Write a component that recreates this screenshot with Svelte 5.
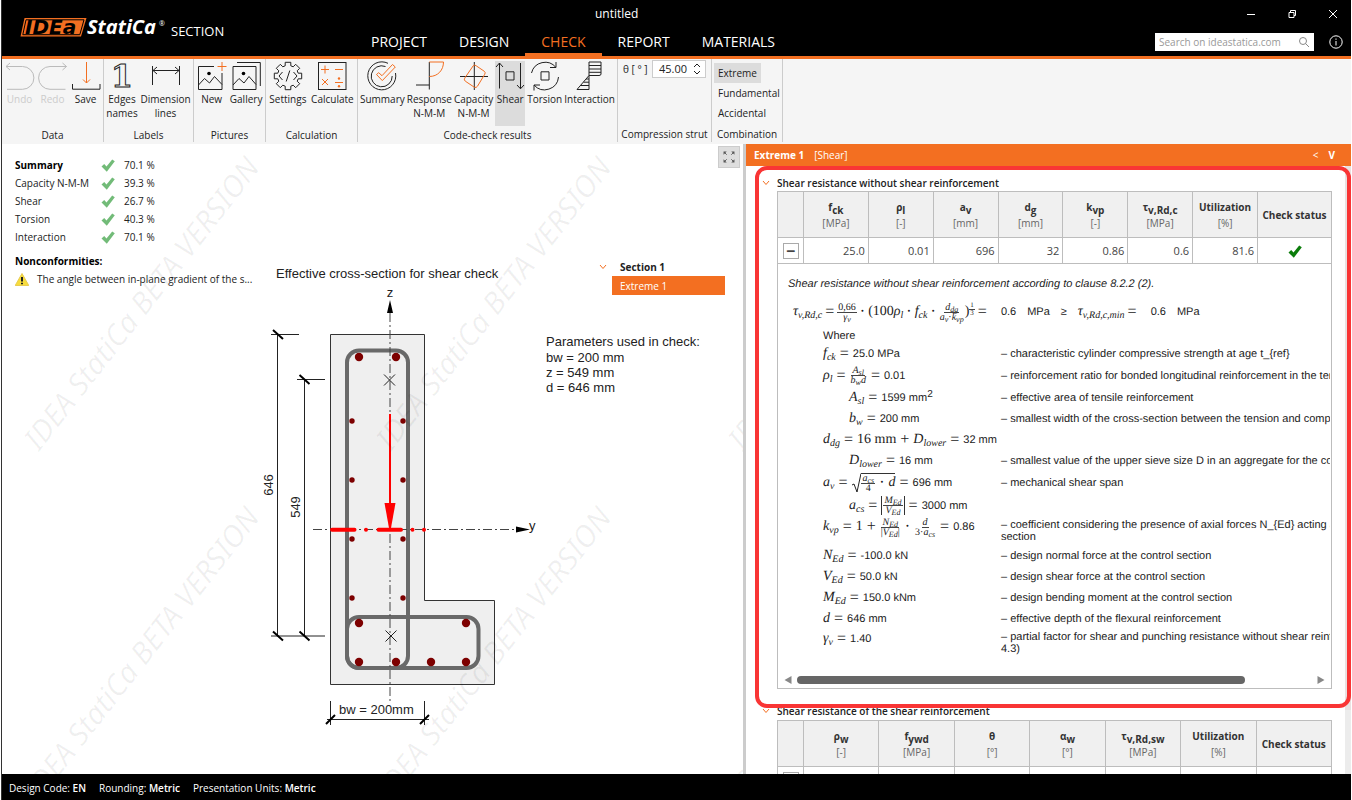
<script lang="ts">
	const tabs = ['PROJECT', 'DESIGN', 'CHECK', 'REPORT', 'MATERIALS']
	let activeTab = $state('CHECK')

	const groups = [
		{ label: 'Data', cls: 'data', items: [['undo', 'Undo'], ['redo', 'Redo'], ['save', 'Save']] },
		{ label: 'Labels', cls: 'labels', items: [['edges', 'Edges names'], ['dimension', 'Dimension lines']] },
		{ label: 'Pictures', cls: 'pictures', items: [['new', 'New'], ['gallery', 'Gallery']] },
		{ label: 'Calculation', cls: 'calc', items: [['settings', 'Settings'], ['calculate', 'Calculate']] },
		{
			label: 'Code-check results',
			cls: 'results',
			items: [
				['summary', 'Summary'],
				['response', 'Response N-M-M'],
				['capacity', 'Capacity N-M-M'],
				['shear', 'Shear'],
				['torsion', 'Torsion'],
				['interaction', 'Interaction']
			]
		}
	]

	let activeTool = $state('shear')
	let combination = $state('Extreme')
	let theta = $state('45.00')

	const summary = [
		['Summary', '70.1 %'],
		['Capacity N-M-M', '39.3 %'],
		['Shear', '26.7 %'],
		['Torsion', '40.3 %'],
		['Interaction', '70.1 %']
	]

	const marks = [
		[39, 452],
		[391, 452],
		[743, 452],
		[39, 802],
		[391, 802],
		[743, 802]
	]
	const bars = [[359, 357], [396, 357], [359, 623], [466, 623], [359, 662], [396, 662], [431, 662], [466, 662]]
	const sideBars = [421, 480, 539, 598]

	// header cells: symbol, subscript, unit
	const resistance = [
		['f', 'ck', '[MPa]', '25.0'],
		['ρ', 'l', '[-]', '0.01'],
		['a', 'v', '[mm]', '696'],
		['d', 'g', '[mm]', '32'],
		['k', 'vp', '[-]', '0.86'],
		['τ', 'v,Rd,c', '[MPa]', '0.6'],
		['Utilization', '', '[%]', '81.6']
	]
	const reinforcement = [
		['ρ', 'w', '[-]'],
		['f', 'ywd', '[MPa]'],
		['θ', '', '[°]'],
		['α', 'w', '[°]'],
		['τ', 'v,Rd,sw', '[MPa]'],
		['Utilization', '', '[%]']
	]

	// maths tokens: plain string, [variable, subscript], or { n, d } for a fraction
	const rows: any[] = [
		{ m: [['f', 'ck'], '='], v: '25.0 MPa', t: ['– characteristic cylinder compressive strength at age t_{ref}'] },
		{ m: [['ρ', 'l'], '=', { n: [['A', 'sl']], d: [['b', 'w'], ['d', '']] }, '='], v: '0.01', t: ['– reinforcement ratio for bonded longitudinal reinforcement in the tensi'], fraction: true },
		{ m: [['A', 'sl'], '='], v: '1599 mm', sup: '2', t: ['– effective area of tensile reinforcement'], sub: true },
		{ m: [['b', 'w'], '='], v: '200 mm', t: ['– smallest width of the cross-section between the tension and compres'], sub: true },
		{ m: [['d', 'dg'], '=', '16 mm', '+', ['D', 'lower'], '='], v: '32 mm', t: [] },
		{ m: [['D', 'lower'], '='], v: '16 mm', t: ['– smallest value of the upper sieve size D in an aggregate for the coar'], sub: true },
		{ m: [['a', 'v'], '=', { root: [{ n: [['a', 'cs']], d: ['4'] }, '·', ['d', '']] }, '='], v: '696 mm', t: ['– mechanical shear span'], fraction: true },
		{ m: [['a', 'cs'], '=', { abs: [{ n: [['M', 'Ed']], d: [['V', 'Ed']] }] }, '='], v: '3000 mm', t: [], sub: true, fraction: true },
		{ m: [['k', 'vp'], '=', '1', '+', { n: [['N', 'Ed']], d: ['|', ['V', 'Ed'], '|'] }, '·', { n: [['d', '']], d: ['3·', ['a', 'cs']] }, '='], v: '0.86', t: ['– coefficient considering the presence of axial forces N_{Ed} acting at', 'section'], tall: true },
		{ m: [['N', 'Ed'], '='], v: '-100.0 kN', t: ['– design normal force at the control section'] },
		{ m: [['V', 'Ed'], '='], v: '50.0 kN', t: ['– design shear force at the control section'] },
		{ m: [['M', 'Ed'], '='], v: '150.0 kNm', t: ['– design bending moment at the control section'] },
		{ m: [['d', ''], '='], v: '646 mm', t: ['– effective depth of the flexural reinforcement'] },
		{ m: [['γ', 'v'], '='], v: '1.40', t: ['– partial factor for shear and punching resistance without shear reinfor', '4.3)'], tall: true }
	]

	function gear() {
		const pts: string[] = []
		const teeth = 8
		for (let i = 0; i < teeth; i++) {
			const a = (i * 2 * Math.PI) / teeth
			const steps = [[-0.27, 10.6], [-0.2, 14], [0.2, 14], [0.27, 10.6]]
			for (const [da, r] of steps) {
				pts.push(`${(15 + r * Math.cos(a + da)).toFixed(1)},${(15 + r * Math.sin(a + da)).toFixed(1)}`)
			}
		}
		return pts.join(' ')
	}

	function spin(step: number) {
		theta = (parseFloat(theta) + step).toFixed(2)
	}
</script>

{#snippet icon(name: string)}
	<svg class="icon" viewBox="0 0 30 30" aria-hidden="true">
		{#if name === 'undo'}
			<path class="off" d="M1 5.5H17.5a11.3 11.3 0 0 1 0 22.8H2M5 2 1 5.5 5 9" />
		{:else if name === 'redo'}
			<path class="off" d="M28.5 5.5H12a11.3 11.3 0 0 0 0 22.8H27.5M24.5 2l4 3.5-4 3.5" />
		{:else if name === 'save'}
			<path class="or" d="M15.5 1V22M12 18.5l3.5 3.5 3.5-3.5" />
			<path d="M1.500 23v5.200H29V23" />
		{:else if name === 'edges'}
			<text x="15" y="26" text-anchor="middle">1</text>
		{:else if name === 'dimension'}
			<path d="M1.5 5v19M28.5 5v19M2 9.5H28M6 6 2 9.5 6 13M24 6l4 3.5L24 13" />
		{:else if name === 'new'}
			<path d="M17 5.5H1.5V28.5H25V12M1.5 24l6-6.5 5 4.5 5-6.5 7.5 8" />
			<circle class="dot" cx="12" cy="12.5" r="1.8" />
			<path class="or" d="M20.5 5.5h9M25 1v9" />
		{:else if name === 'gallery'}
			<path d="M2 5.5H25V28.5H2zM2 24l6-6.5 5 4.5 5-6.5 7 8M6 1.5H29.3V25" />
			<circle class="dot" cx="12.5" cy="12.5" r="1.8" />
		{:else if name === 'settings'}
			<polygon points={gear()} />
			<path d="M9.5 11 6 15l3.5 4M20.5 11l3.5 4-3.5 4M16.8 9.5l-3.6 11" />
		{:else if name === 'calculate'}
			<rect x="1.5" y="1.5" width="27.5" height="27" />
			<path class="or" d="M4 8.500h8M8 4.500v8M18 8.500h8M5 18l6 6M11 18l-6 6M18 21.500h8" />
			<circle class="ordot" cx="22" cy="17.500" r="1.200" />
			<circle class="ordot" cx="22" cy="25.200" r="1.200" />
		{:else if name === 'summary'}
			<path d="M21 2.3A14 14 0 1 0 28.5 12M18.5 5.5A10.5 10.5 0 1 0 25.2 15" />
			<path class="or" d="M9.5 13.5l2.2-1.8 3.3 3L25.500 3.500 28.300 6 15.300 19.600z" />
		{:else if name === 'response'}
			<path d="M15.3 1V28.5M2 24H15.3" />
			<path class="or" d="M15.3 1H29.5c0 8-5.5 14.5-14.2 14.5" />
		{:else if name === 'capacity'}
			<path d="M15.3 1V29M1 15.5H29" />
			<path class="or" d="M14.2 4.8q1.5-1.5 3 0l8 5.4q1.6 1.2.6 3l-7.3 12q-1.2 2-3.2 1l-9-6q-1.6-1.2-.6-3z" />
		{:else if name === 'shear'}
			<path d="M4.500 27.500V2M1 6l3.500-4L8 6M25.500 2V27.500M22 24l3.500 3.800 3.500-3.800M11 10.800h8V19h-8z" />
		{:else if name === 'torsion'}
			<path d="M1.5 12A14 14 0 0 1 26 6.5V1M26 6.5h-6M28.5 16A14 14 0 0 1 4 24v5.5M4 24h6M11 10.8h8V19h-8z" />
		{:else}
			<path d="M14 1H26V13q0 1.5-2 1.5H14zM14 4.5H26M14 8H26M14 11.3H26M14 14.5V28.5H2zM11 18h3M8.5 21.2h5.5M5.5 24.5h8.5" />
		{/if}
	</svg>
{/snippet}

{#snippet tokens(list: any[])}
	{#each list as t}
		{#if typeof t === 'string'}
			<span class={t === '=' || t === '+' || t === '·' ? 'op' : 'num'}>{t}</span>
		{:else if Array.isArray(t)}
			<span class="var">{t[0]}{#if t[1]}<sub>{t[1]}</sub>{/if}</span>
		{:else if t.n}
			<span class="frac"><span class="top">{@render tokens(t.n)}</span><span>{@render tokens(t.d)}</span></span>
		{:else if t.root}
			<svg class="radical" viewBox="0 0 10 20" aria-hidden="true"><path d="M1 12l2-1 3 8L10 .5" /></svg><span class="root">{@render tokens(t.root)}</span>
		{:else if t.abs}
			<span class="abs">{@render tokens(t.abs)}</span>
		{/if}
	{/each}
{/snippet}

{#snippet tick()}
	<svg class="tick" viewBox="0 0 14 13" aria-hidden="true"><path d="M.5 7.500 3.200 5l2.300 2.500L11.200.5l2.600 1.700L5.800 12.800z" /></svg>
{/snippet}

{#snippet caret()}
	<svg class="caret" viewBox="0 0 8 6" aria-hidden="true"><path d="M1 1l3 3.5L7 1" /></svg>
{/snippet}

<div class="app">
	<header>
		<div class="brand">
			<svg class="logo" viewBox="0 0 148 24" aria-label="IDEA StatiCa">
				<path class="plate" d="M4.500 2H66.500L61 20.500H.5z" />
				<path class="inset" d="M6 3.800H64L59.800 18.700H2.800z" />
				<text class="idea" x="5" y="18">IDEa</text>
				<text class="statica" x="67" y="18">StatiCa</text>
				<text class="reg" x="139" y="10">®</text>
			</svg>
			<span>SECTION</span>
		</div>
		<div class="middle">
			<div class="doc">untitled</div>
			<nav>
				{#each tabs as tab}
					<button class="tab" class:active={activeTab === tab} onclick={() => (activeTab = tab)}>{tab}</button>
				{/each}
			</nav>
		</div>
		<div class="right">
			<div class="window">
				<button aria-label="Minimize"><svg viewBox="0 0 10 10"><path d="M1 5.500h8" /></svg></button>
				<button aria-label="Restore"><svg viewBox="0 0 10 10"><path d="M2 3.500h5v5H2zM3.500 3.500v-2h5v5H7" /></svg></button>
				<button aria-label="Close"><svg viewBox="0 0 10 10"><path d="M1 1l8 8M9 1L1 9" /></svg></button>
			</div>
			<div class="find">
				<label class="search">
					<input type="text" placeholder="Search on ideastatica.com" aria-label="Search on ideastatica.com" />
					<svg viewBox="0 0 12 12" aria-hidden="true"><circle cx="5" cy="5" r="3.500" /><path d="M7.500 7.500 11 11" /></svg>
				</label>
				<button class="info" aria-label="Information">
					<svg viewBox="0 0 14 14"><circle cx="7" cy="7" r="6.200" /><path d="M7 6v4.500M7 3.500v1.300" /></svg>
				</button>
			</div>
		</div>
	</header>

	<div class="ribbon">
		{#each groups as group}
			<section class="group {group.cls}">
				<div class="tools">
					{#each group.items as [id, label]}
						<button class="tool" class:active={activeTool === id} disabled={id === 'undo' || id === 'redo'} onclick={() => (activeTool = id)}>
							{@render icon(id)}
							<span>{#each label.split(' ') as word}<span class="word">{word}</span>{/each}</span>
						</button>
					{/each}
				</div>
				<div class="caption">{group.label}</div>
			</section>
		{/each}
		<section class="group strut">
			<div class="angle">
				<label for="theta">θ [ ° ]</label>
				<div class="spinner">
					<input id="theta" type="text" bind:value={theta} />
					<div class="arrows">
						<button aria-label="Increase" onclick={() => spin(1)}><svg viewBox="0 0 8 5"><path d="M1 4l3-3 3 3" /></svg></button>
						<button aria-label="Decrease" onclick={() => spin(-1)}><svg viewBox="0 0 8 5"><path d="M1 1l3 3 3-3" /></svg></button>
					</div>
				</div>
			</div>
			<div class="caption">Compression strut</div>
		</section>
		<section class="group combi">
			<div class="choices">
				{#each ['Extreme', 'Fundamental', 'Accidental'] as c}
					<button class:active={combination === c} onclick={() => (combination = c)}>{c}</button>
				{/each}
			</div>
			<div class="caption">Combination</div>
		</section>
	</div>

	<main>
		<section class="canvas">
			<svg class="drawing" viewBox="2 144 741 630" preserveAspectRatio="xMinYMin meet">
				<path class="concrete" d="M330.500 334.500H424.500V600.500H494.500V684.500H330.500z" />
				<rect class="stirrup" x="347" y="350.500" width="61" height="317.500" rx="12" />
				<rect class="stirrup" x="347" y="617" width="131.500" height="51" rx="12" />
				<path class="axis" d="M390 313V702M313 529.500H517" />
				<path class="black" d="M390 300l3 13h-6zM530 529.500l-14-3v6z" />
				{#each bars as [x, y]}
					<circle class="bar" cx={x} cy={y} r="4.200" />
				{/each}
				{#each sideBars as y}
					<circle class="bar" cx="352" cy={y} r="2.700" />
					<circle class="bar" cx="403" cy={y} r="2.700" />
				{/each}
				<path class="cross" d="M384 374.500l11 11M395 374.500l-11 11M385.500 630.500l11 11M396.500 630.500l-11 11" />
				<path class="force" d="M390 414V506" />
				<path class="red" d="M384.500 503h11L391 528h-2z" />
				<path class="neutral" d="M332 529.800h22.500M366 529.800h.01M378.500 529.800h22.500M412.500 529.800h.01M424 529.800h.01" />
				<path class="dim" d="M277.500 334.500V636M271 334.500h28M271 636h54M304.500 379.500V636M297 379.500h28M330.500 701v24M424.500 701v24M327 719.500h102" />
				<path class="slash" d="M273 330l10 9M299.500 375l10 9M273 631.500l10 9M299.500 631.500l10 9M326 724l9-9M420 724l9-9" />
				<text x="276" y="278">Effective cross-section for shear check</text>
				<text x="390" y="297" text-anchor="middle">z</text>
				<text x="529" y="530">y</text>
				<text x="339" y="714">bw = 200mm</text>
				<text text-anchor="middle" transform="translate(273 485) rotate(-90)">646</text>
				<text text-anchor="middle" transform="translate(300 507) rotate(-90)">549</text>
				<text x="546" y="346">Parameters used in check:</text>
				<text x="546" y="362">bw = 200 mm</text>
				<text x="546" y="377">z = 549 mm</text>
				<text x="546" y="392">d = 646 mm</text>
				{#each marks as [x, y]}
					<text class="watermark" transform="translate({x} {y}) rotate(-52)">IDEA StatiCa BETA VERSION</text>
				{/each}
			</svg>

			<div class="overview">
				<ul>
					{#each summary as [name, value], i}
						<li class:strong={i === 0}><span>{name}</span>{@render tick()}<span class="pct">{value}</span></li>
					{/each}
				</ul>
				<h2>Nonconformities:</h2>
				<div class="warning">
					<svg viewBox="0 0 14 13" aria-hidden="true"><path d="M7 .5 13.800 12.500H.2z" /><path class="bang" d="M7 4v4.500M7 9.700v1.500" /></svg>
					<span>The angle between in-plane gradient of the s...</span>
				</div>
			</div>

			<div class="tree">
				<div class="node">{@render caret()}<b>Section 1</b></div>
				<button>Extreme 1</button>
			</div>

			<button class="expand" aria-label="Zoom to fit">
				<svg viewBox="0 0 22 22"><path d="M8.500 8.500 6 6M13.500 8.500 16 6M8.500 13.500 6 16M13.500 13.500 16 16" /><path class="tips" d="M5 5h3.500L5 8.500zM17 5v3.500L13.500 5zM5 17v-3.500L8.500 17zM17 17h-3.500l3.500-3.500z" /></svg>
			</button>
		</section>

		<section class="results-pane">
			<div class="pane-title"><b>Extreme 1</b><span>[Shear]</span><span class="less">&lt;</span><b>V</b></div>
			<div class="scroll">
				<div class="sheets">
					<article class="first-sheet">
						<h3>{@render caret()}Shear resistance without shear reinforcement</h3>
						<table>
							<thead>
								<tr>
									<th class="toggle"></th>
									{#each resistance as [s, sub, unit]}
										<th><span class="sym">{s}{#if sub}<sub>{sub}</sub>{/if}</span><span class="unit">{unit}</span></th>
									{/each}
									<th class="status">Check status</th>
								</tr>
							</thead>
							<tbody>
								<tr>
									<td class="toggle"><button aria-label="Collapse">−</button></td>
									{#each resistance as r}
										<td>{r[3]}</td>
									{/each}
									<td class="ok">{@render tick()}</td>
								</tr>
							</tbody>
						</table>
						<div class="detail">
							<p class="clause">Shear resistance without shear reinforcement according to clause 8.2.2 (2).</p>
							<div class="main-formula">
								<span class="math">{@render tokens([['τ', 'v,Rd,c'], '=', { n: ['0,66'], d: [['γ', 'v']] }, '·', '(100', ['ρ', 'l'], '·', ['f', 'ck'], '·', { n: [['d', 'dg']], d: [['a', 'v'], '·', ['k', 'vp']] }, ')'])}<span class="power">{@render tokens([{ n: ['1'], d: ['3'] }])}</span>{@render tokens(['='])}</span>
								<span>0.6</span><span>MPa</span><span>≥</span>
								<span class="math">{@render tokens([['τ', 'v,Rd,c,min'], '='])}</span>
								<span>0.6</span><span>MPa</span>
							</div>
							<p class="where">Where</p>
							<div class="legend">
								{#each rows as row}
									<div class="row" class:nested={row.sub} class:fraction={row.fraction} class:tall={row.tall}>
										<div class="math">{@render tokens(row.m)}<span class="value">{row.v}{#if row.sup}<sup>{row.sup}</sup>{/if}</span></div>
										<div class="desc">{#each row.t as line}<span>{line}</span>{/each}</div>
									</div>
								{/each}
							</div>
							<div class="hbar">
								<svg viewBox="0 0 8 8" aria-hidden="true"><path d="M7.500 0v8L.5 4z" /></svg>
								<div class="track"><div class="thumb"></div></div>
								<svg viewBox="0 0 8 8" aria-hidden="true"><path d="M.5 0v8L7.500 4z" /></svg>
							</div>
						</div>
					</article>

					<article class="next">
						<h3>{@render caret()}Shear resistance of the shear reinforcement</h3>
						<table>
							<thead>
								<tr>
									<th class="toggle"></th>
									{#each reinforcement as [s, sub, unit]}
										<th><span class="sym">{s}{#if sub}<sub>{sub}</sub>{/if}</span><span class="unit">{unit}</span></th>
									{/each}
									<th>Check status</th>
								</tr>
							</thead>
							<tbody>
								<tr>
									<td class="toggle"><button aria-label="Collapse">−</button></td>
									{#each reinforcement as _}
										<td></td>
									{/each}
									<td class="ok">{@render tick()}</td>
								</tr>
							</tbody>
						</table>
					</article>
				</div>
				<div class="vbar"><div></div></div>
			</div>
		</section>
	</main>

	<footer>
		<span>Design Code: <b>EN</b></span>
		<span>Rounding: <b>Metric</b></span>
		<span>Presentation Units: <b>Metric</b></span>
	</footer>
</div>

<style>
	:global(body) {
		background: #fff;
	}

	.app {
		--orange: #f36f21;
		--line: #bdbdbd;
		height: 100vh;
		margin: 0 1px;
		border-left: 1px solid #333;
		box-sizing: border-box;
		display: flex;
		flex-direction: column;
		overflow: hidden;
		font-family: 'Open Sans', 'Noto Sans', sans-serif;
		font-size: 10px;
		line-height: 14px;
		color: #222;
	}

	button {
		font: inherit;
		color: inherit;
		background: none;
		border: 0;
		padding: 0;
	}

	svg {
		fill: none;
		stroke: currentColor;
		flex: none;
	}

	h2,
	h3,
	p,
	ul {
		margin: 0;
		padding: 0;
		font-size: inherit;
		list-style: none;
	}

	header {
		flex: none;
		height: 56px;
		display: flex;
		background: #000;
		color: #fff;
		border-bottom: 3px solid var(--orange);
	}

	.brand {
		width: 351px;
		display: flex;
		align-items: center;
		gap: 3px;
		padding-left: 18px;
		box-sizing: border-box;
		font-size: 13px;
	}

	.brand > span {
		padding-top: 6px;
	}

	.logo {
		width: 148px;
		height: 24px;
		stroke: none;
		overflow: visible;
	}

	.plate {
		fill: var(--orange);
	}

	.logo .inset {
		stroke: #000;
	}

	.logo text {
		fill: #fff;
		font-weight: 700;
		font-style: italic;
	}

	.logo .idea {
		fill: #000;
		font-family: 'DejaVu Sans', sans-serif;
		font-size: 20px;
	}

	.logo .statica {
		font-size: 20px;
	}

	.logo .reg {
		font-size: 7px;
		font-weight: 400;
	}

	.middle {
		flex: 1;
		display: flex;
		flex-direction: column;
		justify-content: space-between;
	}

	.doc {
		padding: 6px 0 0 242px;
		font-size: 12px;
		line-height: 16px;
	}

	nav {
		display: flex;
		padding-left: 2px;
	}

	.tab {
		padding: 4px 16px 2px;
		font-size: 14px;
		line-height: 18px;
		border-bottom: 3px solid transparent;
	}

	.tab.active {
		color: var(--orange);
		border-color: var(--orange);
	}

	.right {
		padding-right: 8px;
		display: flex;
		flex-direction: column;
		justify-content: space-between;
	}

	.window {
		display: flex;
		justify-content: flex-end;
		gap: 31px;
		padding: 9px 5px 0 0;
	}

	.window button,
	.window svg {
		display: block;
		width: 10px;
		height: 10px;
	}

	.find {
		display: flex;
		align-items: center;
		gap: 15px;
		padding-bottom: 5px;
	}

	.search {
		width: 159px;
		height: 18px;
		display: flex;
		align-items: center;
		background: #fff;
		color: #888;
		padding: 0 4px;
		box-sizing: border-box;
	}

	.search input {
		flex: 1;
		min-width: 0;
		padding: 0;
		border: 0;
		outline: 0;
		font: inherit;
	}

	.search input::placeholder {
		color: #999;
	}

	.search svg {
		width: 12px;
		height: 12px;
	}

	.info,
	.info svg {
		display: block;
		width: 14px;
		height: 14px;
	}

	.ribbon {
		flex: none;
		height: 85px;
		display: flex;
		background: #f5f5f5;
	}

	.group {
		flex: none;
		display: flex;
		flex-direction: column;
		justify-content: space-between;
		box-sizing: border-box;
		border-right: 1px solid #ccc;
		margin-bottom: 2px;
	}

	.data {
		width: 102px;
	}

	.labels {
		width: 90px;
	}

	.pictures {
		width: 72px;
	}

	.calc {
		width: 92px;
	}

	.results {
		width: 260px;
	}

	.strut {
		width: 94px;
	}

	.combi {
		width: 71px;
	}

	.caption {
		text-align: center;
		white-space: nowrap;
	}

	.strut .caption,
	.combi .caption {
		padding-bottom: 1px;
	}

	.tools {
		display: flex;
		justify-content: space-around;
		padding: 2px 1px 0;
	}

	.tool {
		height: 65px;
		min-width: 29px;
		display: flex;
		flex-direction: column;
		align-items: center;
		gap: 1px;
	}

	.tool.active {
		background: #dcdcdc;
	}

	.tool:disabled {
		color: #ccc;
	}

	.word {
		display: block;
	}

	.icon {
		width: 30px;
		height: 30px;
		stroke: #222;
		overflow: visible;
	}

	.icon text {
		font: 32px 'DejaVu Serif', serif;
		font-weight: 700;
	}

	.icon .or {
		stroke: var(--orange);
	}

	.icon .off {
		stroke: #bbb;
	}

	.icon .dot {
		fill: #000;
		stroke: none;
	}

	.icon .ordot {
		fill: var(--orange);
		stroke: none;
	}

	.angle {
		display: flex;
		align-items: center;
		justify-content: space-between;
		padding: 1px 5px;
	}

	.spinner {
		width: 54px;
		height: 18px;
		display: flex;
		background: #fff;
		border: 1px solid #ccc;
		box-sizing: border-box;
	}

	.spinner input {
		width: 40px;
		padding: 0 0 0 6px;
		border: 0;
		box-sizing: border-box;
		font: inherit;
		font-size: 11px;
		color: inherit;
		background: none;
	}

	.arrows {
		display: flex;
		flex-direction: column;
		justify-content: space-evenly;
	}

	.arrows button,
	.arrows svg {
		display: block;
		width: 8px;
		height: 5px;
	}

	.choices {
		display: flex;
		flex-direction: column;
		align-items: flex-start;
		padding: 4px 0 0 2px;
	}

	.choices button {
		height: 20px;
		padding: 0 4px;
	}

	.choices .active {
		background: #dcdcdc;
	}

	main {
		flex: 1;
		min-height: 0;
		display: flex;
	}

	.canvas {
		flex: 741;
		position: relative;
		background: #fff;
		overflow: hidden;
	}

	.drawing {
		position: absolute;
		inset: 0;
		width: 100%;
		height: 100%;
		stroke: none;
	}

	.drawing text {
		font-family: 'Liberation Sans', Arial, sans-serif;
		font-size: 13px;
		fill: #222;
	}

	.drawing .watermark {
		font-family: 'Noto Sans', sans-serif;
		font-style: italic;
		font-size: 30px;
		fill: #000;
		fill-opacity: 0.06;
	}

	.concrete {
		fill: #efefef;
		stroke: #333;
	}

	.stirrup {
		stroke: #696969;
		stroke-width: 4;
	}

	.axis {
		stroke: #444;
		stroke-dasharray: 9 3 2 3;
	}

	.black {
		fill: #000;
	}

	.bar {
		fill: #7d0000;
	}

	.cross,
	.dim {
		stroke: #222;
	}

	.slash {
		stroke: #000;
		stroke-width: 2;
	}

	.force {
		stroke: #f00;
		stroke-width: 2;
	}

	.red {
		fill: #f00;
	}

	.neutral {
		stroke: #f00;
		stroke-width: 4;
		stroke-linecap: round;
	}

	.overview {
		position: relative;
		width: 260px;
		padding: 12px 0 0 13px;
	}

	.overview li {
		height: 18px;
		line-height: 18px;
		display: grid;
		grid-template-columns: 86px 23px 1fr;
		align-items: center;
	}

	.overview .strong span:first-child {
		font-weight: 700;
		color: #000;
	}

	.overview h2 {
		margin-top: 6px;
		line-height: 18px;
		color: #000;
	}

	.warning {
		display: flex;
		align-items: center;
		gap: 8px;
		line-height: 18px;
		white-space: nowrap;
	}

	.warning svg {
		width: 14px;
		height: 13px;
		fill: #f7dc3c;
		stroke: #e8cc50;
	}

	.warning .bang {
		stroke: #222;
		stroke-width: 2;
	}

	.tick {
		width: 14px;
		height: 13px;
		fill: #72bb78;
		stroke: none;
	}

	.ok .tick {
		fill: #0b7d0b;
		vertical-align: middle;
	}

	.caret {
		width: 8px;
		height: 6px;
		stroke: var(--orange);
	}

	.tree {
		position: absolute;
		top: 114px;
		right: 18px;
		width: 126px;
	}

	.node {
		display: flex;
		align-items: center;
		gap: 13px;
		height: 18px;
	}

	.tree button {
		display: block;
		width: 113px;
		height: 19px;
		margin-left: auto;
		padding-left: 8px;
		text-align: left;
		background: var(--orange);
		color: #fff;
	}

	.expand {
		position: absolute;
		top: 2px;
		right: 3px;
		width: 22px;
		height: 22px;
		background: #dedede;
		border: 1px solid #ccc;
		color: #555;
	}

	.expand svg {
		display: block;
		width: 20px;
		height: 20px;
	}

	.expand .tips {
		fill: #555;
		stroke: none;
	}

	.results-pane {
		flex: 605;
		min-width: 0;
		display: flex;
		flex-direction: column;
		border-left: 3px solid #ccc;
		background: #fff;
	}

	.pane-title {
		flex: none;
		height: 22px;
		display: flex;
		align-items: center;
		gap: 10px;
		padding: 0 16px 0 8px;
		background: var(--orange);
		color: #fff;
	}

	.less {
		margin-left: auto;
	}

	.scroll {
		position: relative;
		flex: 1;
		min-height: 0;
		display: flex;
	}

	/* highlight drawn over the first sheet */
	.scroll::after {
		content: '';
		position: absolute;
		top: 0;
		left: 9px;
		right: 0;
		height: 534px;
		border: 4px solid #f93535;
		border-radius: 12px;
		pointer-events: none;
	}

	.sheets {
		flex: 1;
		min-width: 0;
		overflow: hidden;
		padding: 8px 13px 0 15px;
	}

	.vbar {
		width: 6px;
		background: #ececec;
	}

	.vbar div {
		height: 544px;
		background: #e9e1e1;
	}

	h3 {
		display: flex;
		align-items: center;
		gap: 7px;
		height: 17px;
		padding-left: 1px;
		color: #222;
		font-weight: 600;
	}

	.next h3 {
		margin-top: 13px;
		padding-bottom: 1px;
	}

	table {
		width: calc(100% - 16px);
		margin-left: 16px;
		table-layout: fixed;
		border-collapse: collapse;
		box-sizing: border-box;
	}

	th,
	td {
		border: 1px solid var(--line);
		padding: 0;
	}

	th {
		height: 45px;
		background: #f0f0f0;
		color: #333;
	}

	.toggle {
		width: 25px;
	}

	.status {
		width: 73px;
	}

	.sym,
	.unit {
		display: block;
		line-height: 16px;
	}

	.sym sub {
		font-size: 10px;
		line-height: 0;
		vertical-align: -3px;
	}

	.unit {
		font-weight: 400;
		color: #666;
	}

	td {
		height: 25px;
		padding-right: 3px;
		text-align: right;
		font-size: 11px;
		color: #444;
	}

	td.toggle,
	td.ok {
		padding: 0;
		text-align: center;
	}

	td button {
		width: 16px;
		height: 16px;
		border: 1px solid #aaa;
		font-size: 16px;
		font-weight: 700;
		line-height: 12px;
		vertical-align: middle;
	}

	.detail {
		height: 425px;
		margin-left: 16px;
		box-sizing: border-box;
		border: 1px solid var(--line);
		border-top: 0;
		padding: 13px 1px 3px;
		overflow: hidden;
		display: flex;
		flex-direction: column;
		font-family: 'Liberation Sans', Arial, sans-serif;
		font-size: 11px;
		text-rendering: geometricPrecision;
		white-space: nowrap;
	}

	.clause {
		padding-left: 9px;
		font-style: italic;
	}

	.main-formula {
		display: flex;
		align-items: center;
		gap: 11px;
		height: 34px;
		padding: 4px 0 0 14px;
	}

	.where {
		padding-left: 44px;
	}

	.legend {
		flex: 1;
		padding-left: 44px;
		overflow: hidden;
	}

	.row {
		display: grid;
		grid-template-columns: 178px 1fr;
		align-items: center;
		height: 21px;
	}

	.nested {
		grid-template-columns: 152px 1fr;
		padding-left: 26px;
	}

	.fraction {
		height: 23px;
	}

	.tall {
		height: 28px;
		align-items: start;
	}

	.tall .desc {
		padding-top: 2px;
	}

	.desc span {
		display: block;
		line-height: 12px;
	}

	.math {
		display: flex;
		align-items: center;
		font-family: 'Liberation Serif', 'Times New Roman', serif;
		font-size: 14px;
		line-height: 20px;
	}

	.math .var {
		font-style: italic;
	}

	.math sub {
		font-size: 10px;
		line-height: 0;
		vertical-align: -3px;
	}

	.op {
		padding: 0 4px;
		font-size: 16px;
	}

	.main-formula .op {
		padding: 0 3px;
	}

	.value {
		font-family: 'Liberation Sans', Arial, sans-serif;
		font-size: 11px;
	}

	.value sup {
		font-size: 10px;
		line-height: 0;
		vertical-align: 4px;
	}

	.frac {
		display: inline-flex;
		flex-direction: column;
		align-items: center;
		font-size: 10px;
		line-height: 9px;
	}

	.frac .op {
		padding: 0;
		font-size: 10px;
	}

	.frac > span {
		padding: 0 1px;
		height: 9px;
		display: flex;
	}

	.frac .top {
		border-bottom: 1px solid #444;
	}

	.frac sub {
		font-size: 8px;
		vertical-align: -2px;
	}

	.power {
		display: flex;
		align-self: flex-start;
	}

	.power .frac {
		font-size: 7px;
		line-height: 7px;
	}

	.power .frac > span {
		height: 7px;
	}

	.radical {
		width: 10px;
		height: 20px;
	}

	.root {
		display: flex;
		align-items: center;
		height: 19px;
		border-top: 1px solid #333;
	}

	.abs {
		display: flex;
		border: solid #333;
		border-width: 0 1px;
		padding: 0 1px;
	}

	.hbar {
		display: flex;
		align-items: center;
		gap: 5px;
		padding: 0 5px;
		height: 10px;
	}

	.hbar svg {
		width: 8px;
		height: 8px;
		fill: #888;
		stroke: none;
	}

	.track {
		flex: 1;
	}

	.thumb {
		width: 87%;
		height: 8px;
		border-radius: 4px;
		background: #666;
	}

	footer {
		flex: none;
		height: 26px;
		display: flex;
		align-items: center;
		gap: 13px;
		padding: 2px 0 0 7px;
		box-sizing: border-box;
		background: #000;
		color: #fff;
	}

	footer b {
		font-weight: 600;
	}
</style>
